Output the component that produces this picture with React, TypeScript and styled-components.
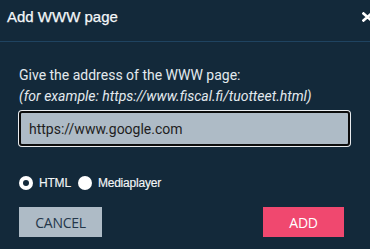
import React from "react";
import styled, { createGlobalStyle } from "styled-components";

const Global = createGlobalStyle`
  html, body { margin: 0; padding: 0; background: #13293a; overflow: hidden; }
  * { box-sizing: border-box; }
`;

const Dialog = styled.div`
  width: 370px;
  height: 249px;
  background: #13293a;
  overflow: hidden;
`;

const Header = styled.div`
  height: 42px;
  display: flex;
  justify-content: space-between;
  align-items: flex-start;
  padding: 8px 0 0 7px;
  border-bottom: 1px solid #1f4360;
`;

const Title = styled.h1`
  margin: 0;
  font-family: "Liberation Sans", Arial, sans-serif;
  font-size: 15px;
  line-height: 18px;
  font-weight: 400;
  color: #f4f7f9;
  -webkit-text-stroke: 0.25px #f4f7f9;
`;

const Close = styled.button`
  margin: 4px -3px 0 0;
  padding: 0;
  width: 11px;
  height: 10px;
  border: 0;
  background: none;
  display: flex;
`;

const Body = styled.div`
  padding: 23px 19px 0 19px;
  display: flex;
  flex-direction: column;
`;

const Prompt = styled.p`
  margin: 0;
  font-family: Roboto, "Liberation Sans", sans-serif;
  font-size: 14px;
  line-height: 21px;
  color: #e3e9ee;
`;

const Example = styled(Prompt)`
  font-style: italic;
`;

const UrlInput = styled.input`
  margin-top: 4px;
  width: calc(100% - 1px);
  height: 35px;
  border: 2px solid #0c0c0c;
  border-radius: 3px;
  box-shadow: 0 0 0 1px #e9ecef;
  background: #aebbc6;
  padding: 0 8px;
  font-family: Roboto, "Liberation Sans", sans-serif;
  font-size: 14px;
  color: #1e1e22;
  outline: none;
`;

const RadioRow = styled.div`
  margin-top: 30px;
  display: flex;
  align-items: center;
  height: 14px;
`;

const RadioLabel = styled.label`
  display: flex;
  align-items: center;
  font-family: "Liberation Sans", Arial, sans-serif;
  font-size: 12px;
  color: #f2f5f7;
  letter-spacing: -0.2px;
  margin-right: 7px;
  gap: 6px;
  -webkit-text-stroke: 0.15px #f2f5f7;
`;

const RadioDot = styled.span<{ $checked?: boolean }>`
  width: 14px;
  height: 14px;
  border-radius: 50%;
  background: #fff;
  display: flex;
  align-items: center;
  justify-content: center;
  &::after {
    content: "";
    width: 6px;
    height: 6px;
    border-radius: 50%;
    background: ${(p) => (p.$checked ? "#13293a" : "transparent")};
  }
`;

const ButtonRow = styled.div`
  margin-top: 17px;
  display: flex;
  justify-content: space-between;
  padding-right: 7px;
`;

const Button = styled.button<{ $primary?: boolean }>`
  height: 30px;
  width: ${(p) => (p.$primary ? "81px" : "83px")};
  border: 0;
  border-radius: 0;
  background: ${(p) => (p.$primary ? "#f0486f" : "#aebbc6")};
  color: ${(p) => (p.$primary ? "#ffffff" : "#24374a")};
  font-family: "Open Sans", "Noto Sans", sans-serif;
  font-size: 14px;
  letter-spacing: -0.3px;
  padding: 0;
`;

export default function App() {
  return (
    <>
      <Global />
      <Dialog>
        <Header>
          <Title>Add WWW page</Title>
          <Close aria-label="close">
            <svg width="11" height="10" viewBox="0 0 11 10">
              <path d="M1.5 1.5 L9.5 8.5 M9.5 1.5 L1.5 8.5" stroke="#ffffff" strokeWidth="2.6" strokeLinecap="square" />
            </svg>
          </Close>
        </Header>
        <Body>
          <Prompt>Give the address of the WWW page:</Prompt>
          <Example>(for example: https://www.fiscal.fi/tuotteet.html)</Example>
          <UrlInput defaultValue="https://www.google.com" />
          <RadioRow>
            <RadioLabel>
              <RadioDot $checked />
              HTML
            </RadioLabel>
            <RadioLabel>
              <RadioDot />
              Mediaplayer
            </RadioLabel>
          </RadioRow>
          <ButtonRow>
            <Button>CANCEL</Button>
            <Button $primary>ADD</Button>
          </ButtonRow>
        </Body>
      </Dialog>
    </>
  );
}
